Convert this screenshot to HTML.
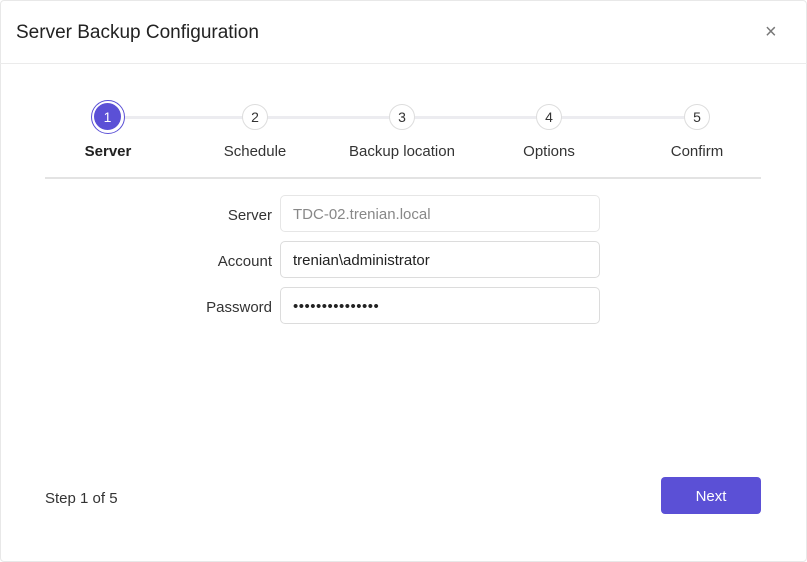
<!DOCTYPE html>
<html><head><style>
*{box-sizing:border-box;margin:0;padding:0}
body{width:807px;height:562px;background:#fff;font-family:"Liberation Sans",sans-serif;color:#222;position:relative;overflow:hidden}
.frame{position:absolute;left:0;top:0;width:807px;height:562px;border:1px solid #e8e8e8;border-radius:4px}
.title{position:absolute;left:16px;top:22px;font-size:19px;color:#222}
.close{position:absolute;left:765px;top:21px;font-size:20px;color:#777}
.hr1{position:absolute;left:0;top:63px;width:807px;height:1px;background:#ebebeb}
.line{position:absolute;left:108px;top:116px;width:589px;height:3px;background:#ececf0}
.c{position:absolute;width:26px;height:26px;border-radius:50%;background:#fff;border:1px solid #ddd;font-size:14px;text-align:center;line-height:25px;color:#333}
.c1{position:absolute;left:91px;top:100px;width:34px;height:34px;border-radius:50%;border:1.5px solid #5b50d6;background:#fff}
.c1 div{position:absolute;left:2px;top:2px;width:27px;height:27px;border-radius:50%;background:#5b50d6;color:#fff;font-size:14px;text-align:center;line-height:28px}
.lb{position:absolute;top:143px;font-size:15px;color:#333;transform:translateX(-50%);white-space:nowrap}
.hr2{position:absolute;left:45px;top:177px;width:716px;height:2px;background:#e3e3e3}
.fl{position:absolute;right:535px;font-size:15px;color:#333}
.in{position:absolute;left:280px;width:320px;height:37px;border:1px solid #dcdcdc;border-radius:5px;padding-left:12px;font-size:15px;line-height:37px;color:#222}
.step{position:absolute;left:45px;top:490px;font-size:15px;color:#333}
.btn{position:absolute;left:661px;top:477px;width:100px;height:37px;background:#5b50d6;border-radius:4px;color:#fff;font-size:15px;text-align:center;line-height:39px}
</style></head><body>
<div class="frame"></div>
<div class="title">Server Backup Configuration</div>
<div class="close">×</div>
<div class="hr1"></div>
<div class="line"></div>
<div class="c1"><div>1</div></div>
<div class="c" style="left:242px;top:104px">2</div>
<div class="c" style="left:389px;top:104px">3</div>
<div class="c" style="left:536px;top:104px">4</div>
<div class="c" style="left:684px;top:104px">5</div>
<div class="lb" style="left:108px;font-weight:bold;color:#222">Server</div>
<div class="lb" style="left:255px">Schedule</div>
<div class="lb" style="left:402px">Backup location</div>
<div class="lb" style="left:549px">Options</div>
<div class="lb" style="left:697px">Confirm</div>
<div class="hr2"></div>
<div class="fl" style="top:207px">Server</div>
<div class="in" style="top:195px;color:#888;border-color:#e6e6e6">TDC-02.trenian.local</div>
<div class="fl" style="top:253px">Account</div>
<div class="in" style="top:241px">trenian\administrator</div>
<div class="fl" style="top:299px">Password</div>
<div class="in" style="top:287px;letter-spacing:0.5px">•••••••••••••••</div>
<div class="step">Step 1 of 5</div>
<div class="btn">Next</div>
</body></html>
